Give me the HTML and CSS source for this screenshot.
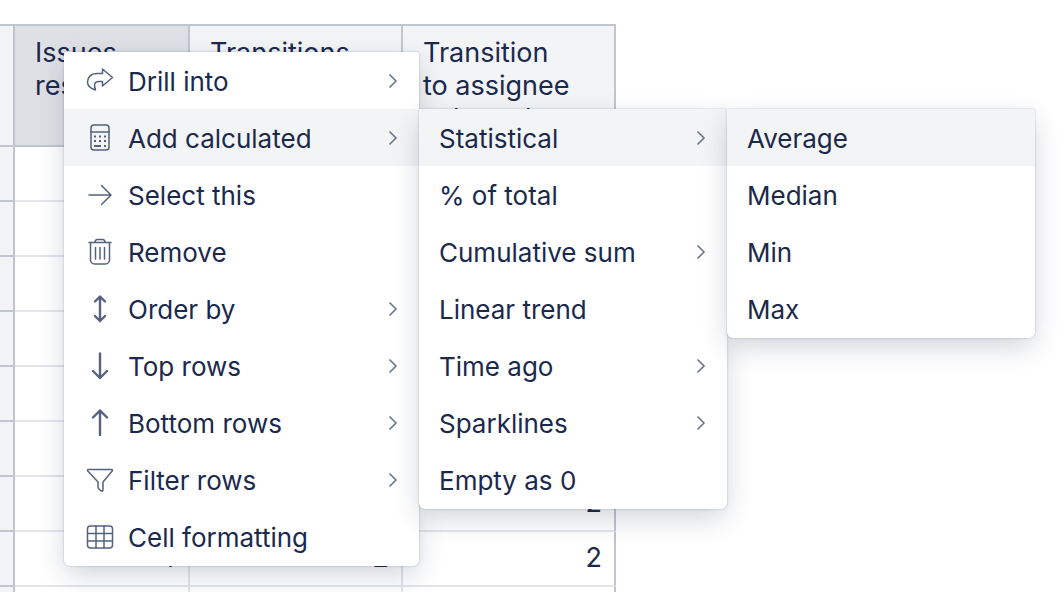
FILE: index.html
```html
<!DOCTYPE html>
<html lang="en">
<head>
<meta charset="utf-8">
<title>Report table</title>
<link rel="stylesheet" href="styles.css">
</head>
<body>
<svg class="sprite" aria-hidden="true">
  <symbol id="chevron" viewBox="0 0 10 16"><path d="M1.500 1.500 8 8l-6.500 6.500"/></symbol>
</svg>
<main class="report">
  <table class="grid">
    <colgroup><col class="col-row"><col class="col-issues"><col class="col-measure"><col class="col-measure"></colgroup>
    <thead>
      <tr><td class="corner"></td><th class="active" scope="col">Issues<br>resolved</th><th scope="col">Transitions<br>to status</th><th scope="col">Transition<br>to assignee<br>selected</th></tr>
    </thead>
    <tbody>
      <tr><th scope="row"></th><td></td><td></td><td></td></tr>
      <tr><th scope="row"></th><td></td><td></td><td></td></tr>
      <tr><th scope="row"></th><td></td><td></td><td></td></tr>
      <tr><th scope="row"></th><td></td><td></td><td></td></tr>
      <tr><th scope="row"></th><td></td><td></td><td></td></tr>
      <tr><th scope="row"></th><td></td><td></td><td></td></tr>
      <tr><th scope="row"></th><td></td><td></td><td>2</td></tr>
      <tr><th scope="row"></th><td>4</td><td>2</td><td>2</td></tr>
      <tr><th scope="row"></th><td></td><td></td><td></td></tr>
    </tbody>
  </table>

  <ul class="menu menu-root">
    <li><button class="item" type="button"><svg class="icon" viewBox="0 0 28 28"><path d="M16.500 2 26.500 10.500 16.500 19V14.500h-4c-4 0-5 3.500-3 8.500C4 21.500 1.500 18.500 1.500 15c0-5 4-8.500 9-8.500h6z"/></svg><span class="label">Drill into</span><svg class="chevron"><use href="#chevron"/></svg></button></li>
    <li><button class="item open" type="button"><svg class="icon" viewBox="0 0 28 28"><rect x="5" y="1" width="18" height="25" rx="3"/><path d="M5 8h18"/><path class="dots" d="M8 12.500h2m3 0h2m3 0h2M8 17h2m3 0h2m3 0h2M8 22h7m3 0h2"/></svg><span class="label">Add calculated</span><svg class="chevron"><use href="#chevron"/></svg></button>
      <ul class="menu submenu">
        <li><button class="item open" type="button"><span class="label">Statistical</span><svg class="chevron"><use href="#chevron"/></svg></button>
          <ul class="menu submenu">
            <li><button class="item open" type="button"><span class="label">Average</span></button></li>
            <li><button class="item" type="button"><span class="label">Median</span></button></li>
            <li><button class="item" type="button"><span class="label">Min</span></button></li>
            <li><button class="item" type="button"><span class="label">Max</span></button></li>
          </ul>
        </li>
        <li><button class="item" type="button"><span class="label">% of total</span></button></li>
        <li><button class="item" type="button"><span class="label">Cumulative sum</span><svg class="chevron"><use href="#chevron"/></svg></button></li>
        <li><button class="item" type="button"><span class="label">Linear trend</span></button></li>
        <li><button class="item" type="button"><span class="label">Time ago</span><svg class="chevron"><use href="#chevron"/></svg></button></li>
        <li><button class="item" type="button"><span class="label">Sparklines</span><svg class="chevron"><use href="#chevron"/></svg></button></li>
        <li><button class="item" type="button"><span class="label">Empty as 0</span></button></li>
      </ul>
    </li>
    <li><button class="item" type="button"><svg class="icon" viewBox="0 0 28 28"><path d="M3 14h22M15.500 4.500 25 14l-9.500 9.500"/></svg><span class="label">Select this</span></button></li>
    <li><button class="item" type="button"><svg class="icon" viewBox="0 0 28 28"><path d="M3 4.500h22M9 4.500C9 2.500 10 1.500 11.500 1.500h5C18 1.500 19 2.500 19 4.500M4.500 4.500V22a4 4 0 0 0 4 4h11a4 4 0 0 0 4-4V4.500M9.500 9.500v11.500M14 9.500v11.500M18.500 9.500v11.500"/></svg><span class="label">Remove</span></button></li>
    <li><button class="item" type="button"><svg class="icon bold" viewBox="0 0 28 28"><path d="M14 2v24M9 6.500l5-5 5 5M9 21l5 5 5-5"/></svg><span class="label">Order by</span><svg class="chevron"><use href="#chevron"/></svg></button></li>
    <li><button class="item" type="button"><svg class="icon bold" viewBox="0 0 28 28"><path d="M14 1.500V26M7 19l7 7 7-7"/></svg><span class="label">Top rows</span><svg class="chevron"><use href="#chevron"/></svg></button></li>
    <li><button class="item" type="button"><svg class="icon bold" viewBox="0 0 28 28"><path d="M14 26V1.500M7 8.500l7-7 7 7"/></svg><span class="label">Bottom rows</span><svg class="chevron"><use href="#chevron"/></svg></button></li>
    <li><button class="item" type="button"><svg class="icon" viewBox="0 0 28 28"><path d="M2.500 3.500h23c1.200 0 1.200 1 .5 1.800L17 16v7.500c0 2-1 2.200-2.200 1.200L12.500 22.500 12 21.500V16L2 5.300c-.7-.8-.7-1.800.5-1.800z"/></svg><span class="label">Filter rows</span><svg class="chevron"><use href="#chevron"/></svg></button></li>
    <li><button class="item" type="button"><svg class="icon" viewBox="0 0 28 28"><rect x="1.500" y="3" width="25" height="22" rx="3"/><path d="M10 3v22M18 3v22M1.500 10.500h25M1.500 18h25"/></svg><span class="label">Cell formatting</span></button></li>
  </ul>
</main>
</body>
</html>
```
FILE: styles.css
```css
* { box-sizing: border-box; }

body {
  margin: 0;
  background: #fff;
  color: #1b294d;
  font-family: Inter, "Liberation Sans", sans-serif;
  font-size: 26px;
  line-height: 33px;
}

.sprite { display: none; }

.report {
  position: relative;
  height: 100vh;
  padding-top: 24px;
  overflow: hidden;
}

.grid {
  width: 616px;
  table-layout: fixed;
  border-collapse: separate;
  border-spacing: 0;
  font-size: 27px;
}

.col-row { width: 15px; }
.col-issues { width: 175px; }
.col-measure { width: 213px; }

.grid th,
.grid td {
  height: 55px;
  padding: 0 12px 2px;
  border-right: 2px solid #e4e5eb;
  border-bottom: 2px solid #e4e5eb;
  text-align: right;
  font-weight: 400;
}

.grid thead th,
.grid thead td {
  height: 123px;
  padding: 10px 20px;
  border-top: 2px solid #c1c5cf;
  border-color: #c1c5cf;
  background: #f3f4f6;
  text-align: left;
  vertical-align: top;
}

.grid thead .active { background: #dfe0e5; }

.grid tbody th {
  padding: 0;
  border-color: #c1c5cf;
  background: #f3f4f6;
}

.grid td:last-child { border-right-color: #c1c5cf; }

.menu {
  margin: 0;
  padding: 0 0 1px;
  list-style: none;
  background: #fff;
  border-radius: 2px 2px 6px 6px;
  box-shadow: 0 0 2px rgba(9, 30, 66, .3), 0 10px 28px -2px rgba(9, 30, 66, .2);
}

.menu li { position: relative; }

.menu-root {
  position: absolute;
  top: 52px;
  left: 64px;
  width: 355px;
}

.submenu {
  position: absolute;
  top: 0;
  left: 100%;
  width: 308px;
}

.item {
  display: flex;
  align-items: center;
  width: 100%;
  height: 57px;
  padding: 0 21px 0 20px;
  border: 0;
  background: transparent;
  color: inherit;
  font: inherit;
  text-align: left;
  white-space: nowrap;
}

.item.open { background: #f3f4f6; }

.label { padding-top: 1px; }

.icon {
  flex: none;
  width: 28px;
  height: 28px;
  margin: 0 14px 0 2px;
  fill: none;
  stroke: #56617d;
  stroke-width: 1.5;
  stroke-linecap: round;
  stroke-linejoin: round;
}

.icon.bold { stroke-width: 2.4; }
.icon .dots { stroke-width: 2; stroke-linecap: butt; }

.chevron {
  width: 10px;
  height: 16px;
  margin-left: auto;
  fill: none;
  stroke: #6b758d;
  stroke-width: 1.6;
}
```
